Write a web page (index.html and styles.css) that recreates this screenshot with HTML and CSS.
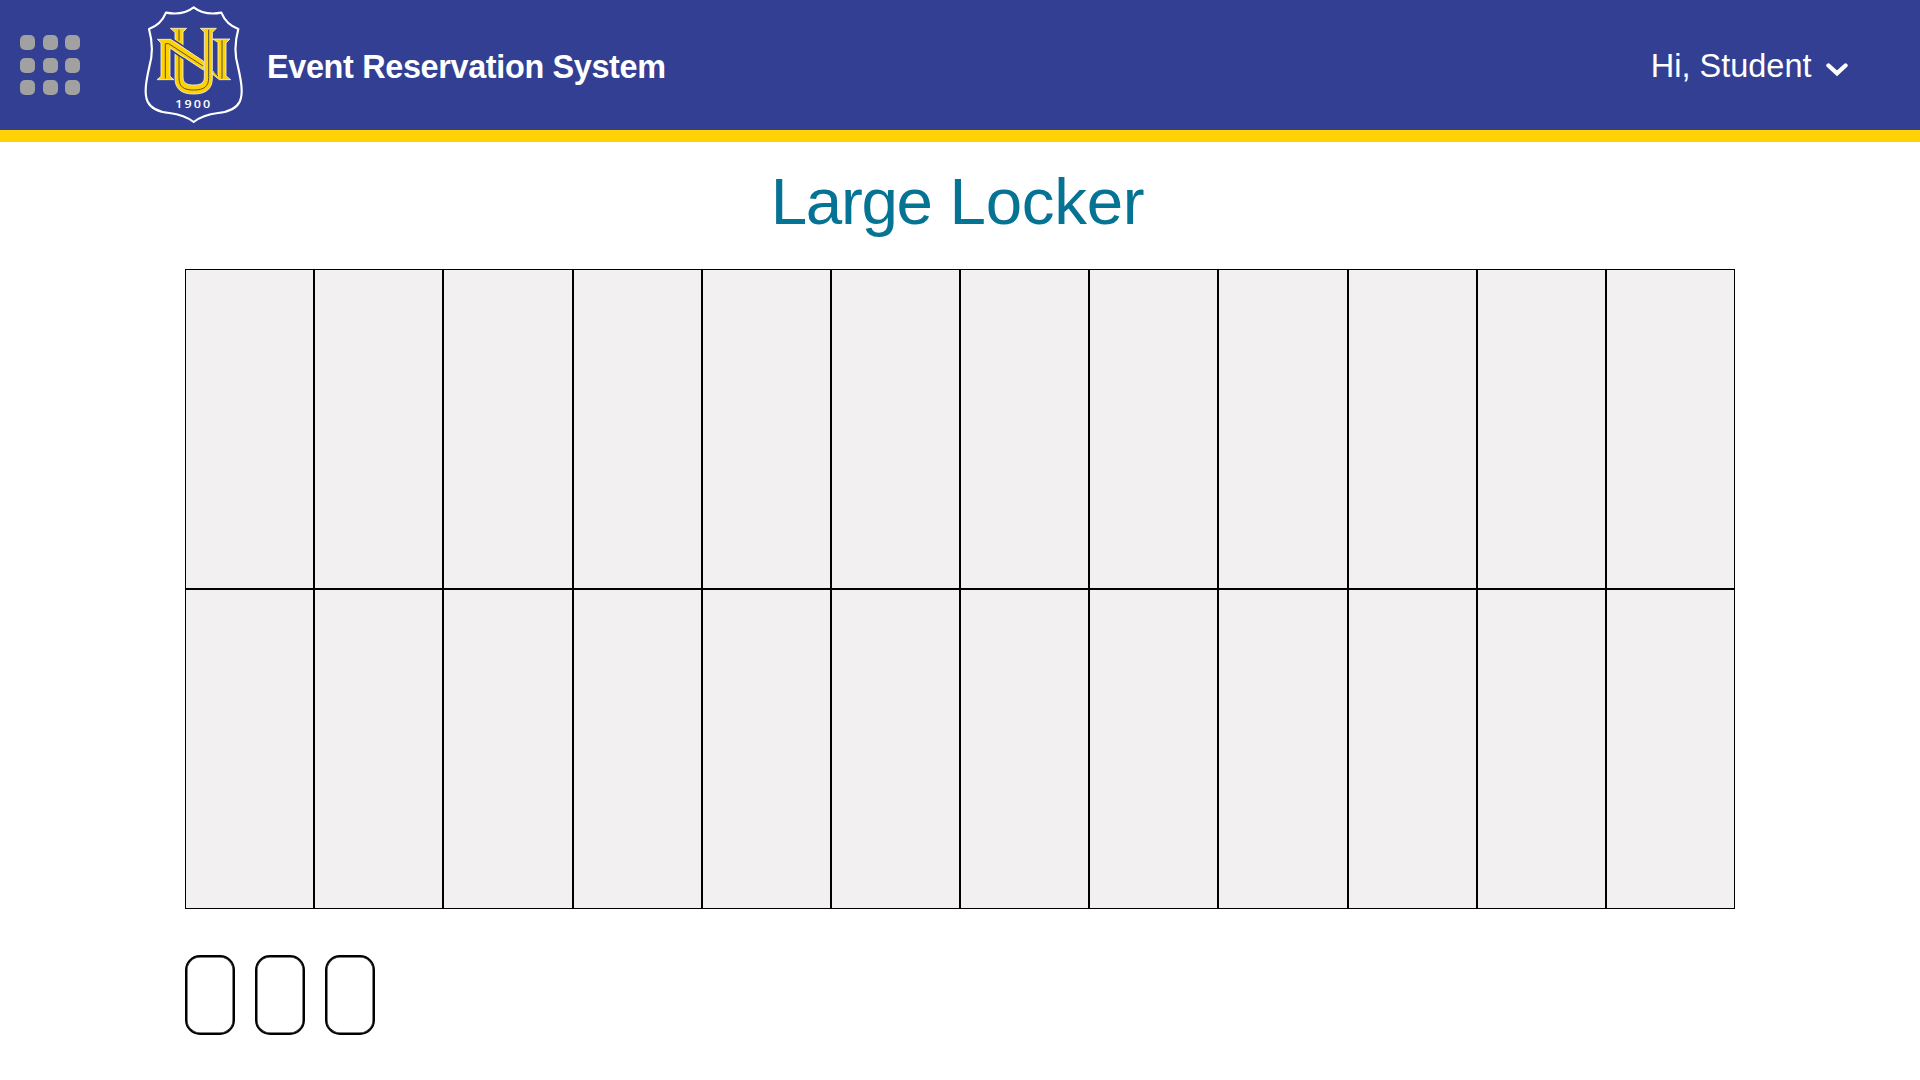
FILE: index.html
```html
<!DOCTYPE html>
<html lang="en">
<head>
<meta charset="utf-8">
<title>Event Reservation System</title>
<link rel="stylesheet" href="styles.css">
</head>
<body>
<header class="topbar">
  <div class="apps" aria-hidden="true"><i></i><i></i><i></i><i></i><i></i><i></i><i></i><i></i><i></i></div>
  <svg class="crest" viewBox="0 0 390 390" aria-hidden="true">
    <path class="shield" d="M191 22C169 39 140 44 108 38C98 62 80 79 57 87C66 120 70 160 58 200C49 240 41 280 53 305C63 325 90 336 118 339C150 343 172 351 191 366C210 351 232 343 264 339C292 336 319 325 329 305C341 280 333 240 324 200C312 160 316 120 325 87C302 79 284 62 274 38C242 44 213 39 191 22Z"/>
    <path class="mono" d="M250 214L264 228V127L248 117H300L288 129V228L302 239H268L247 222Z"/>
    <path class="mono" d="M121 85H170L159 96V231C159 248 168 255 191 255C214 255 223 248 223 231V96L211 85H259L247 97V234C247 266 229 282 191 282C153 282 135 266 135 234V97Z"/>
    <path class="gap" d="M124 115L214 174M124 151L214 211"/>
    <path class="mono" d="M82 118H122L220 183V210L120 144V229L132 239H81L93 229V129Z"/>
    <path class="inline" d="M106 236V131H116L219 198M147 168V233C147 260 160 270 191 270C222 270 236 260 236 233V89M147 122V89M276 121V236M251 216L264 228"/>
    <text class="year" x="136" y="325" textLength="111" lengthAdjust="spacingAndGlyphs">1900</text>
  </svg>
  <div class="brand">Event Reservation System</div>
  <div class="user">
    <span class="greeting">Hi, Student</span>
    <svg class="chevron" viewBox="0 0 22 14" aria-hidden="true"><path d="M2.5 2.5L11 10.3L19.5 2.5"/></svg>
  </div>
</header>
<main class="page">
  <h1 class="title"><span class="title-size">Large</span> Locker</h1>
  <div class="lockers">
    <div class="locker"></div><div class="locker"></div><div class="locker"></div><div class="locker"></div><div class="locker"></div><div class="locker"></div>
    <div class="locker"></div><div class="locker"></div><div class="locker"></div><div class="locker"></div><div class="locker"></div><div class="locker"></div>
    <div class="locker"></div><div class="locker"></div><div class="locker"></div><div class="locker"></div><div class="locker"></div><div class="locker"></div>
    <div class="locker"></div><div class="locker"></div><div class="locker"></div><div class="locker"></div><div class="locker"></div><div class="locker"></div>
  </div>
  <div class="pager"><div class="pill"></div><div class="pill"></div><div class="pill"></div></div>
</main>
</body>
</html>
```
FILE: styles.css
```css
* { box-sizing: border-box; }
body {
  margin: 0;
  height: 1080px;
  overflow: hidden;
  background: #fff;
  font-family: "Liberation Sans", Arial, sans-serif;
}
.topbar {
  display: flex;
  align-items: flex-start;
  height: 142px;
  padding-left: 20px;
  background: #323f92;
  border-bottom: 12px solid #ffd205;
}
.apps {
  display: grid;
  grid-template-columns: repeat(3, 15px);
  grid-auto-rows: 15px;
  gap: 7.5px;
  margin: 35px 50px 0 0;
}
.apps i { background: #a1a1a1; border-radius: 5px; }
.crest { width: 130px; height: 130px; }
.shield { fill: none; stroke: #fff; stroke-width: 6.5; stroke-linejoin: round; }
.mono { fill: #ffd100; stroke: #f4f0d8; stroke-width: 2.6; }
.gap { fill: none; stroke: #323f92; stroke-width: 5; }
.inline { fill: none; stroke: #55523f; stroke-width: 3; }
.year { font: 600 30px "Open Sans", sans-serif; letter-spacing: 5px; fill: #fff; }
.brand {
  margin: 49px 0 0 7px;
  color: #fff;
  font-size: 32.4px;
  font-weight: 700;
  line-height: 36px;
  letter-spacing: -0.34px;
  white-space: nowrap;
}
.user {
  display: flex;
  margin: 48px 72px 0 auto;
  color: #fff;
  font-size: 32.5px;
  line-height: 37px;
}
.chevron { width: 22px; height: 14px; margin: 15px 0 0 14.5px; }
.chevron path { fill: none; stroke: #fff; stroke-width: 4.4; stroke-linecap: round; stroke-linejoin: miter; }
.page { padding: 0 185px; }
.title {
  margin: 23px 5px 30px 0;
  color: #057394;
  font-size: 65.5px;
  font-weight: 400;
  line-height: 74px;
  letter-spacing: -0.3px;
  text-align: center;
}
.title-size { letter-spacing: -1.3px; }
.lockers {
  display: grid;
  grid-template-columns: repeat(12, 1fr);
  grid-auto-rows: 320px;
}
.locker { background: #f2f0f1; border: 1px solid #000; }
.pager { display: flex; gap: 20px; margin-top: 46px; }
.pill {
  width: 50px;
  height: 80px;
  border: 2px solid #000;
  border-radius: 15px;
  box-shadow: inset 0 0 0 0.5px #000;
}
```
